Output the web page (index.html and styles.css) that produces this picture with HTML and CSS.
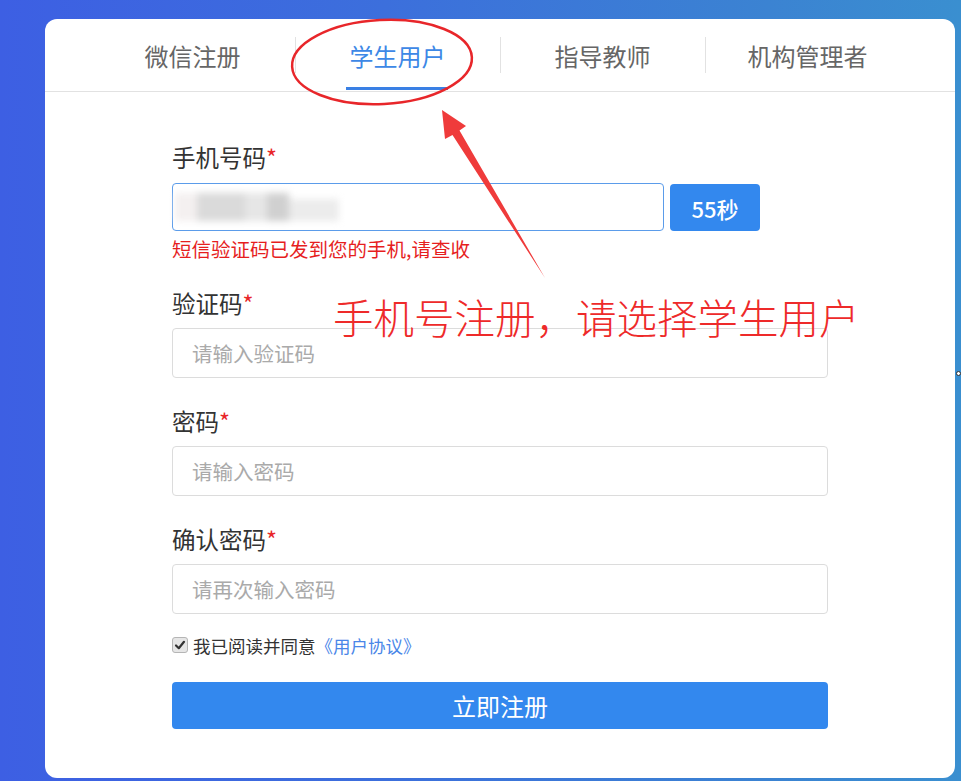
FILE: index.html
```html
<!DOCTYPE html>
<html lang="zh-CN">
<head>
<meta charset="utf-8">
<title>注册</title>
<link rel="stylesheet" href="styles.css">
</head>
<body>
<div class="page">
  <div class="card">
    <div class="tabbar">
      <div class="tabs">
        <div class="tab">微信注册</div>
        <div class="tab active">学生用户</div>
        <div class="tab">指导教师</div>
        <div class="tab">机构管理者</div>
      </div>
    </div>
    <form class="form">
      <div class="group first">
        <div class="label">手机号码<span class="star">*</span></div>
        <div class="phone-row">
          <div class="input focused">
            <span class="blur">
              <i class="b1"></i><i class="b2"></i><i class="b3"></i><i class="b4"></i><i class="b5"></i>
            </span>
          </div>
          <button type="button" class="code-btn">55秒</button>
        </div>
        <div class="error">短信验证码已发到您的手机,请查收</div>
      </div>
      <div class="group">
        <div class="label">验证码<span class="star">*</span></div>
        <div class="input"><span class="ph">请输入验证码</span></div>
      </div>
      <div class="group">
        <div class="label">密码<span class="star">*</span></div>
        <div class="input"><span class="ph">请输入密码</span></div>
      </div>
      <div class="group">
        <div class="label">确认密码<span class="star">*</span></div>
        <div class="input"><span class="ph">请再次输入密码</span></div>
      </div>
      <label class="agree">
        <span class="check">
          <svg width="12" height="12" viewBox="0 0 12 12"><path d="M2 6.5 L4.8 9.2 L10 2.8" fill="none" stroke="#333" stroke-width="2.2" stroke-linecap="round" stroke-linejoin="round"/></svg>
        </span>我已阅读并同意<a class="link">《用户协议》</a>
      </label>
      <button type="button" class="submit">立即注册</button>
    </form>
  </div>

  <svg class="annot" width="961" height="781" viewBox="0 0 961 781">
    <ellipse cx="382" cy="62" rx="90" ry="42" fill="none" stroke="#e8262a" stroke-width="2.5" transform="rotate(-3 382 62)"/>
    <polygon points="442,110 466,126 459.5,130.5 545,278 452.5,135 445,139" fill="#ef3b3b"/>
  </svg>
  <div class="annot-text">手机号注册，请选择学生用户</div>
  <span class="edge-mark"></span>
</div>
</body>
</html>
```
FILE: styles.css
```css
* { box-sizing: border-box; }
html, body {
  margin: 0;
  padding: 0;
  width: 961px;
  height: 781px;
  overflow: hidden;
}
body {
  font-family: "Noto Sans CJK SC", "Noto Sans", sans-serif;
  background: linear-gradient(90deg, #3d5fe3 0%, #3c6fdc 40%, #3b83d2 80%, #3a8fd0 100%);
}
.page {
  position: relative;
  width: 961px;
  height: 781px;
  padding: 19px 0 0 45px;
}
.card {
  width: 910px;
  height: 759px;
  background: #fff;
  border-radius: 12px;
}
.tabbar {
  height: 73px;
  border-bottom: 1px solid #e2e2e2;
}
.tabs {
  width: 820px;
  height: 72px;
  margin: 0 auto;
  display: flex;
}
.tab {
  flex: 1;
  position: relative;
  display: flex;
  align-items: center;
  justify-content: center;
  font-size: 24px;
  color: #666;
}
.tab + .tab::before {
  content: "";
  position: absolute;
  left: 0;
  top: 18px;
  height: 36px;
  width: 1px;
  background: #e2e2e2;
}
.tab.active { color: #3d88e6; }
.tab.active::after {
  content: "";
  position: absolute;
  left: 51px;
  right: 52px;
  bottom: 1px;
  height: 3px;
  background: #3a80e4;
}
.form {
  width: 656px;
  margin: 0 auto;
  padding-top: 50px;
  display: flex;
  flex-direction: column;
}
.group { margin-bottom: 28px; }
.group.first { margin-bottom: 27px; }
.label {
  font-size: 23.5px;
  line-height: 30px;
  color: #333;
  margin-bottom: 10px;
}
.group.first .label { margin-bottom: 11px; }
.star { color: #e8262a; }
.input {
  height: 50px;
  border: 1px solid #dcdcdc;
  border-radius: 4px;
  display: flex;
  align-items: center;
  padding-left: 19px;
}
.ph {
  font-size: 20.5px;
  color: #aaa;
}
.phone-row {
  display: flex;
  gap: 6px;
}
.phone-row .input {
  flex: 0 0 492px;
  height: 48px;
  border-color: #5b9cea;
  padding-left: 0;
}
.blur {
  display: flex;
  height: 28px;
  margin-left: 2px;
  filter: blur(3.5px);
}
.blur i { display: block; height: 28px; }
.blur .b1 { width: 22px; background: #f4f0f0; }
.blur .b2 { width: 48px; background: #dadada; }
.blur .b3 { width: 22px; background: #e6e6e6; }
.blur .b4 { width: 22px; background: #d0d0d0; }
.blur .b5 { width: 50px; background: #ececec; height: 22px; margin-top: 6px; }
.code-btn {
  width: 90px;
  height: 47px;
  margin-top: 1px;
  border: none;
  border-radius: 4px;
  background: #3388ee;
  color: #fff;
  font-family: "Noto Sans CJK SC", sans-serif;
  font-size: 22px;
  font-weight: 500;
  padding: 0;
}
.error {
  margin-top: 6px;
  font-size: 19.5px;
  line-height: 24px;
  color: #e61e1e;
}
.agree {
  display: flex;
  align-items: center;
  margin-top: -9px;
  height: 24px;
  font-size: 17.5px;
  color: #333;
}
.check {
  width: 16px;
  height: 16px;
  border: 1px solid #b5b5b5;
  border-radius: 3px;
  background: #e6e6e6;
  display: flex;
  align-items: center;
  justify-content: center;
  margin-right: 5px;
}
.link { color: #4a86e8; }
.submit {
  margin-top: 25px;
  height: 47px;
  border: none;
  border-radius: 4px;
  background: #3388ee;
  color: #fff;
  font-family: "Noto Sans CJK SC", sans-serif;
  font-size: 24px;
  padding: 0;
}
.annot {
  position: absolute;
  left: 0;
  top: 0;
  pointer-events: none;
}
.annot-text {
  position: absolute;
  left: 333px;
  top: 289px;
  font-size: 40.5px;
  line-height: 56px;
  font-weight: 300;
  color: #ee2a2a;
  white-space: nowrap;
}
.edge-mark {
  position: absolute;
  left: 956px;
  top: 371px;
  width: 5px;
  height: 5px;
  border: 1px solid #333;
  border-radius: 50%;
  background: #fff;
}
```
